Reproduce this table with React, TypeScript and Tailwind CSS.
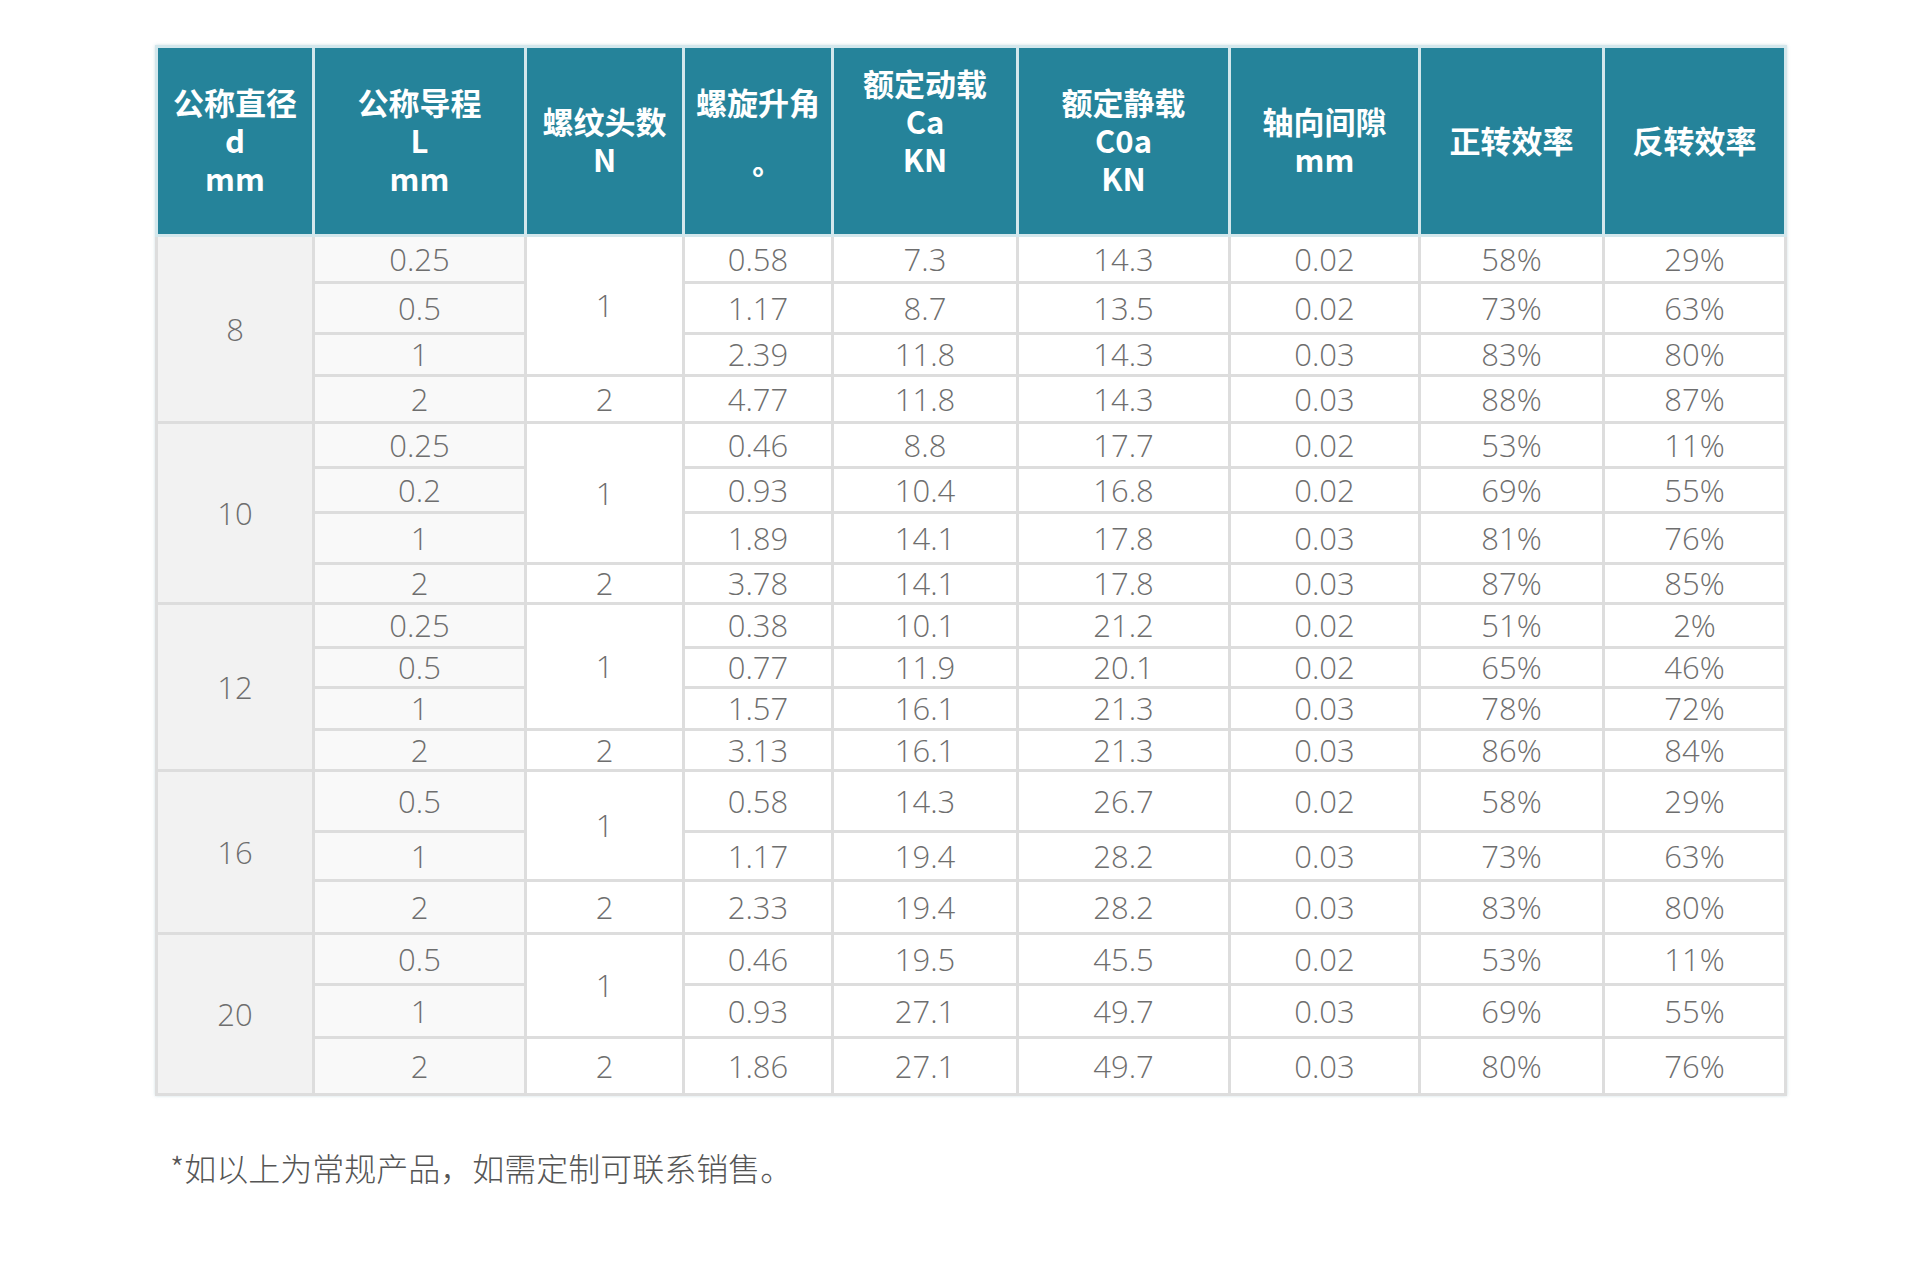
const heights = [
  "h-[47px]", "h-[51px]", "h-[42px]", "h-[47px]",
  "h-[45px]", "h-[45px]", "h-[51px]", "h-[40px]",
  "h-[44px]", "h-[40px]", "h-[42px]", "h-[41px]",
  "h-[61px]", "h-[49px]", "h-[53px]",
  "h-[51px]", "h-[53px]", "h-[57px]",
]

type Group = { d: string; rows: string[][] }

// each row: lead, angle, Ca, C0a, gap, forward, reverse
const groups: Group[] = [
  {
    d: "8",
    rows: [
      ["0.25", "0.58", "7.3", "14.3", "0.02", "58%", "29%"],
      ["0.5", "1.17", "8.7", "13.5", "0.02", "73%", "63%"],
      ["1", "2.39", "11.8", "14.3", "0.03", "83%", "80%"],
      ["2", "4.77", "11.8", "14.3", "0.03", "88%", "87%"],
    ],
  },
  {
    d: "10",
    rows: [
      ["0.25", "0.46", "8.8", "17.7", "0.02", "53%", "11%"],
      ["0.2", "0.93", "10.4", "16.8", "0.02", "69%", "55%"],
      ["1", "1.89", "14.1", "17.8", "0.03", "81%", "76%"],
      ["2", "3.78", "14.1", "17.8", "0.03", "87%", "85%"],
    ],
  },
  {
    d: "12",
    rows: [
      ["0.25", "0.38", "10.1", "21.2", "0.02", "51%", "2%"],
      ["0.5", "0.77", "11.9", "20.1", "0.02", "65%", "46%"],
      ["1", "1.57", "16.1", "21.3", "0.03", "78%", "72%"],
      ["2", "3.13", "16.1", "21.3", "0.03", "86%", "84%"],
    ],
  },
  {
    d: "16",
    rows: [
      ["0.5", "0.58", "14.3", "26.7", "0.02", "58%", "29%"],
      ["1", "1.17", "19.4", "28.2", "0.03", "73%", "63%"],
      ["2", "2.33", "19.4", "28.2", "0.03", "83%", "80%"],
    ],
  },
  {
    d: "20",
    rows: [
      ["0.5", "0.46", "19.5", "45.5", "0.02", "53%", "11%"],
      ["1", "0.93", "27.1", "49.7", "0.03", "69%", "55%"],
      ["2", "1.86", "27.1", "49.7", "0.03", "80%", "76%"],
    ],
  },
]

const headers: string[][] = [
  ["公称直径", "d", "mm"],
  ["公称导程", "L", "mm"],
  ["螺纹头数", "N"],
  ["螺旋升角", "\u00a0", "°"],
  ["额定动载", "Ca", "KN", "\u00a0"],
  ["额定静载", "C0a", "KN"],
  ["轴向间隙", "mm"],
  ["正转效率"],
  ["反转效率"],
]

const cell = "border-[3px] border-[#dddddd] p-0 text-center align-middle"

export default function App() {
  let rowIndex = 0
  return (
    <div className="w-full min-h-[1276px] bg-white pt-[45px] pl-[155px] font-['Open_Sans','Noto_Sans_CJK_SC',sans-serif]">
      <table className="w-[1629px] table-fixed border-collapse shadow-[0_0_3px_rgba(120,170,180,0.35)]">
        <colgroup>
          <col className="w-[157px]" />
          <col className="w-[212px]" />
          <col className="w-[158px]" />
          <col className="w-[149px]" />
          <col className="w-[185px]" />
          <col className="w-[212px]" />
          <col className="w-[190px]" />
          <col className="w-[184px]" />
          <col className="w-[182px]" />
        </colgroup>
        <thead>
          <tr className="h-[189px]">
            {headers.map((lines, i) => (
              <th
                key={i}
                className="border-[3px] border-[#d3e7ec] bg-[#25839a] p-0 pb-[3px] text-center align-middle font-['Noto_Sans_CJK_SC',sans-serif] text-[31px] font-bold leading-[38px] text-white"
              >
                {lines.map((l, j) => (
                  <div key={j}>{l}</div>
                ))}
              </th>
            ))}
          </tr>
        </thead>
        <tbody className="text-[31px] font-light leading-none text-[#6e6e6e]">
          {groups.map((g) =>
            g.rows.map((r, i) => {
              const h = heights[rowIndex++]
              const last = i === g.rows.length - 1
              return (
                <tr key={g.d + "-" + i} className={h}>
                  {i === 0 && (
                    <td rowSpan={g.rows.length} className={cell + " bg-[#f2f2f2]"}>
                      {g.d}
                    </td>
                  )}
                  <td className={cell + " bg-[#f9f9f9]"}>{r[0]}</td>
                  {i === 0 && (
                    <td rowSpan={g.rows.length - 1} className={cell + " bg-white"}>
                      1
                    </td>
                  )}
                  {last && <td className={cell + " bg-white"}>2</td>}
                  {r.slice(1).map((v, k) => (
                    <td key={k} className={cell + " bg-white"}>
                      {v}
                    </td>
                  ))}
                </tr>
              )
            })
          )}
        </tbody>
      </table>
      <p className="mt-[51px] pl-[15px] font-['Noto_Sans_CJK_SC',sans-serif] text-[32px] font-light leading-[40px] text-[#555555]">
        *如以上为常规产品，如需定制可联系销售。
      </p>
    </div>
  )
}
